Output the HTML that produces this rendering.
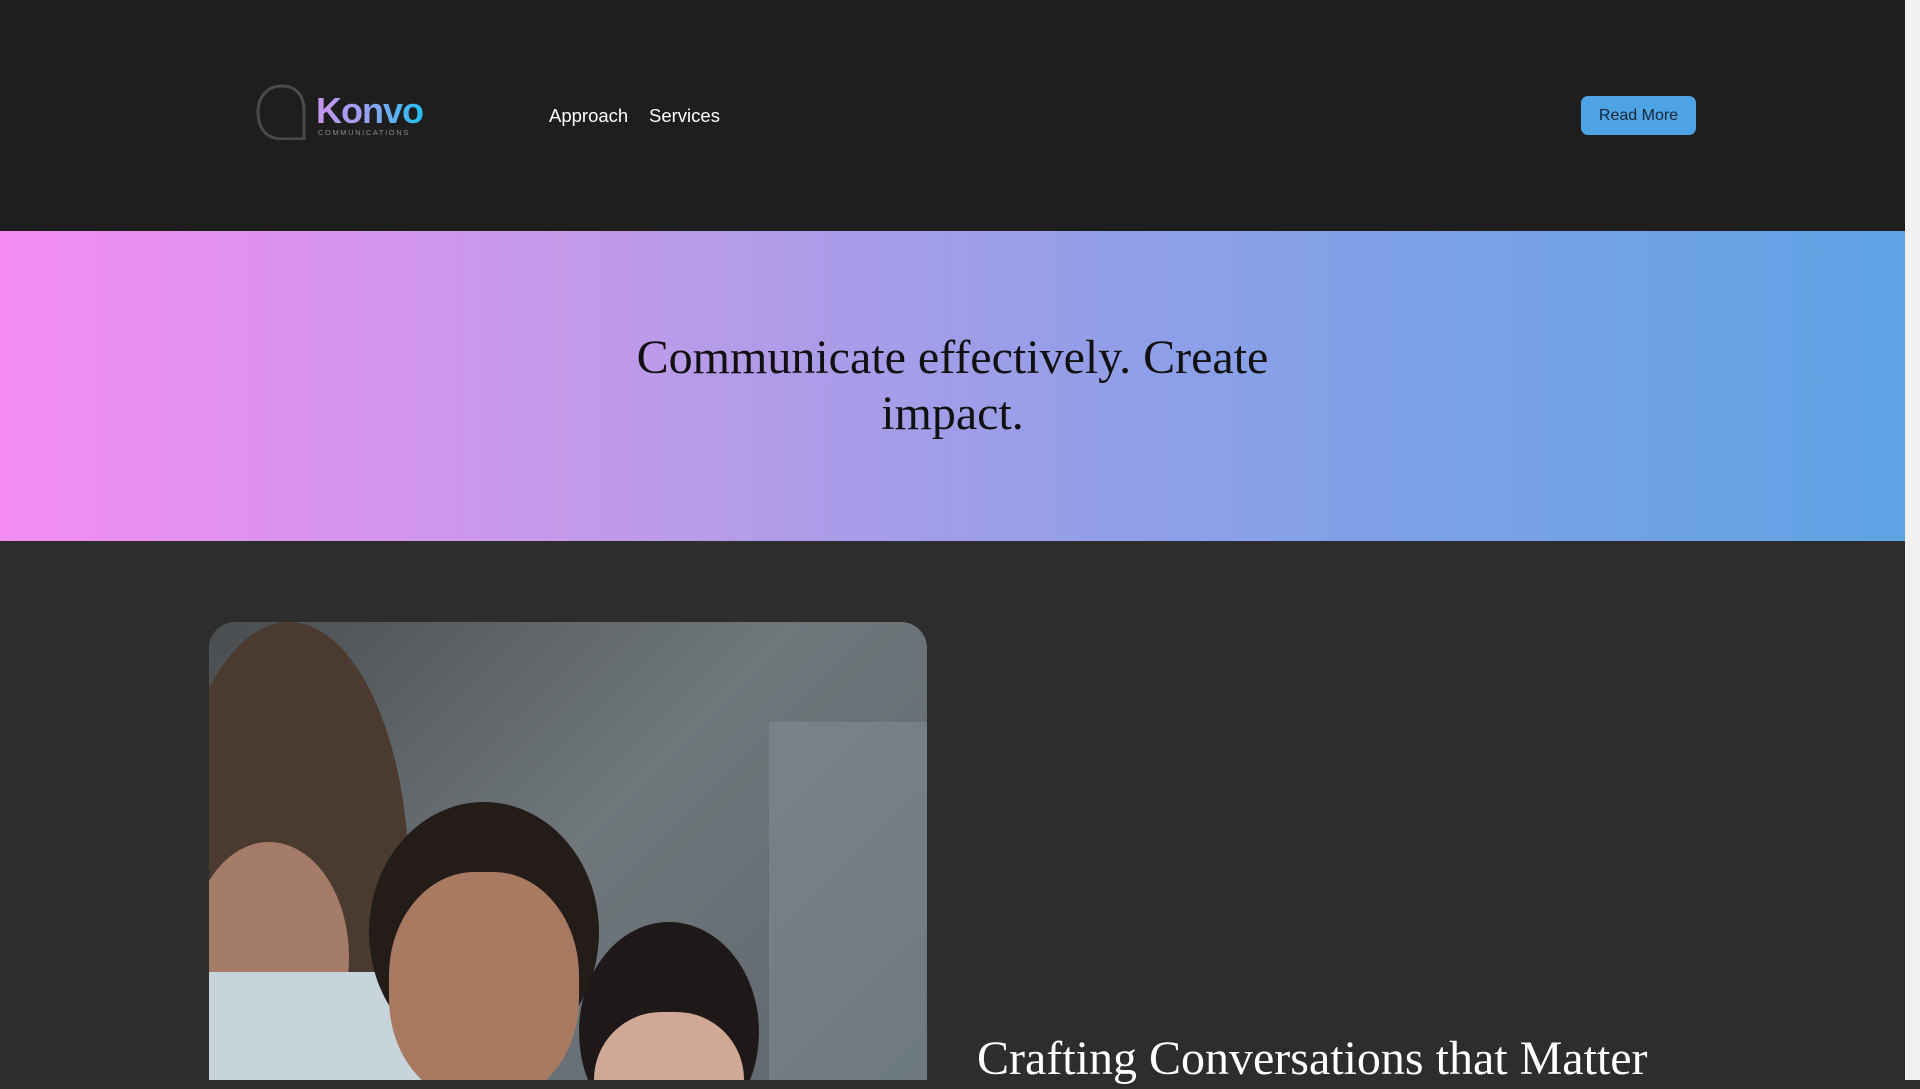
<!DOCTYPE html>
<html><head><meta charset="utf-8"><style>
html,body{margin:0;padding:0;width:1920px;height:1080px;overflow:hidden;background:#2d2d2d;font-family:"Liberation Sans",sans-serif}
.hdr{position:absolute;left:0;top:0;width:1905px;height:231px;background:#1e1e1e}
.nav{position:absolute;top:105px;font-size:18.5px;color:#fff}
.btn{position:absolute;left:1581px;top:96px;width:115px;height:39px;background:#4da3e3;border-radius:7px;color:#16263a;font-size:16px;line-height:39px;text-align:center}
.hero{position:absolute;left:0;top:231px;width:1905px;height:310px;background:linear-gradient(90deg,#f48cf3 0%,#c39ae9 30%,#8f9fe8 60%,#5ea3e4 100%)}
.hero h1{margin:0;position:absolute;left:0;width:1905px;top:99px;text-align:center;font:400 48px/56px "Liberation Serif",serif;color:#111}
.sb{position:absolute;left:1905px;top:0;width:15px;height:1080px;background:#f1f1f1}
.img{position:absolute;left:209px;top:622px;width:718px;height:458px;border-radius:26px 26px 0 0;overflow:hidden;background:linear-gradient(135deg,#4a4d4f,#6f777b 50%,#5d666c)}
.h2{position:absolute;left:977px;top:1029px;font:400 48px/60px "Liberation Serif",serif;color:#fff;white-space:nowrap}
</style></head><body>
<div class="hdr">
<svg style="position:absolute;left:256px;top:84px" width="60" height="56"><path d="M26 55 C10 55 2 44 2 28 C2 12 12 2 26 2 C40 2 48 12 48 26 L48 55 Z" fill="none" stroke="#4a4a4a" stroke-width="3"/></svg>
<div style="position:absolute;left:316px;top:93px;font:700 36px/36px 'Liberation Sans',sans-serif;background:linear-gradient(90deg,#c994f0,#9aa0f0 45%,#24c0f5);-webkit-background-clip:text;color:transparent;letter-spacing:-1px">Konvo</div>
<div style="position:absolute;left:318px;top:128px;font-size:7.5px;color:#888;letter-spacing:1.6px">COMMUNICATIONS</div>
<div class="nav" style="left:549px">Approach</div>
<div class="nav" style="left:649px">Services</div>
<div class="btn">Read More</div>
</div>
<div class="hero"><h1>Communicate effectively. Create<br>impact.</h1></div>
<div class="img">
<div style="position:absolute;left:-40px;top:0;width:240px;height:520px;border-radius:50%;background:#4a3a30"></div>
<div style="position:absolute;left:-20px;top:220px;width:160px;height:230px;border-radius:50%;background:#a57c68"></div>
<div style="position:absolute;left:0;top:350px;width:300px;height:150px;background:#c8d4dc"></div>
<div style="position:absolute;left:160px;top:180px;width:230px;height:260px;border-radius:50%;background:#241c18"></div>
<div style="position:absolute;left:180px;top:250px;width:190px;height:230px;border-radius:45%;background:#a87a62"></div>
<div style="position:absolute;left:370px;top:300px;width:180px;height:220px;border-radius:50%;background:#1e1818"></div>
<div style="position:absolute;left:385px;top:390px;width:150px;height:150px;border-radius:45%;background:#cfa896"></div>
<div style="position:absolute;left:560px;top:100px;width:158px;height:370px;background:rgba(150,165,175,.3)"></div>
</div>
<div class="h2">Crafting Conversations that Matter</div>
<div class="sb"></div>
</body></html>
